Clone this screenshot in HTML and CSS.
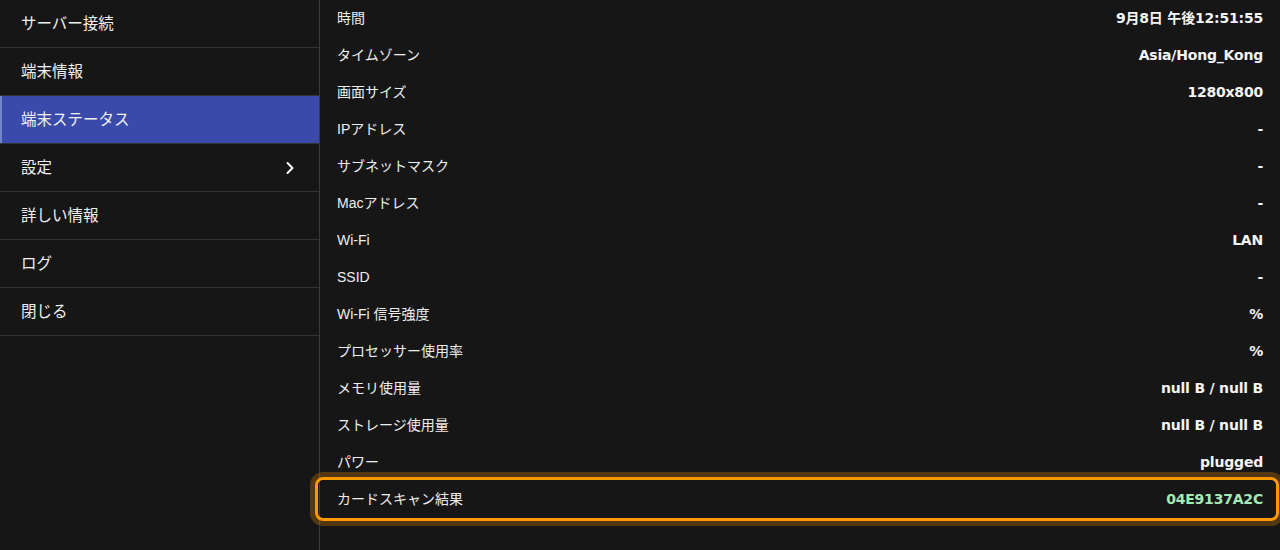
FILE: index.html
```html
<!DOCTYPE html>
<html lang="ja">
<head>
<meta charset="utf-8">
<link rel="stylesheet" href="styles.css">
</head>
<body>
<div class="app">
  <nav class="sidebar">
    <div class="nav-item">サーバー接続</div>
    <div class="nav-item">端末情報</div>
    <div class="nav-item active">端末ステータス</div>
    <div class="nav-item has-sub">設定
      <svg class="chev" width="10" height="14" viewBox="0 0 10 14"><path d="M2.5 2 L7.5 7 L2.5 12" fill="none" stroke="#fff" stroke-width="2" stroke-linecap="round" stroke-linejoin="round"/></svg>
    </div>
    <div class="nav-item">詳しい情報</div>
    <div class="nav-item">ログ</div>
    <div class="nav-item">閉じる</div>
  </nav>
  <main class="content">
    <div class="row"><span class="label">時間</span><span class="value">9月8日 午後12:51:55</span></div>
    <div class="row"><span class="label">タイムゾーン</span><span class="value">Asia/Hong_Kong</span></div>
    <div class="row"><span class="label">画面サイズ</span><span class="value">1280x800</span></div>
    <div class="row"><span class="label">IPアドレス</span><span class="value">-</span></div>
    <div class="row"><span class="label">サブネットマスク</span><span class="value">-</span></div>
    <div class="row"><span class="label">Macアドレス</span><span class="value">-</span></div>
    <div class="row"><span class="label">Wi-Fi</span><span class="value">LAN</span></div>
    <div class="row"><span class="label">SSID</span><span class="value">-</span></div>
    <div class="row"><span class="label">Wi-Fi 信号強度</span><span class="value">%</span></div>
    <div class="row"><span class="label">プロセッサー使用率</span><span class="value">%</span></div>
    <div class="row"><span class="label">メモリ使用量</span><span class="value">null B / null B</span></div>
    <div class="row"><span class="label">ストレージ使用量</span><span class="value">null B / null B</span></div>
    <div class="row"><span class="label">パワー</span><span class="value">plugged</span></div>
    <div class="row focused"><span class="label">カードスキャン結果</span><span class="value scan">04E9137A2C</span></div>
  </main>
</div>
</body>
</html>
```

FILE: styles.css
```css
html, body {
  margin: 0;
  padding: 0;
  background: #161616;
  height: 100%;
  overflow: hidden;
}
body {
  font-family: "Liberation Sans", "Noto Sans CJK JP", sans-serif;
  color: #f2f2f2;
}
.app {
  display: flex;
  height: 550px;
}
.sidebar {
  width: 319px;
  flex: 0 0 319px;
  border-right: 1px solid #3a3a3a;
  padding-left: 2px;
  box-sizing: content-box;
  margin-left: -2px;
}
.nav-item {
  height: 47px;
  border-bottom: 1px solid #333;
  display: flex;
  align-items: center;
  padding-left: 21px;
  padding-right: 24px;
  font-size: 15.5px;
  line-height: 1;
  color: #f0f0f0;
  position: relative;
}
.nav-item.active {
  background: #3a4aab;
  margin-left: -2px;
  padding-left: 23px;
  box-shadow: inset 4px 0 0 #7384c9;
}
.nav-item.has-sub {
  justify-content: space-between;
}
.chev {
  display: block;
}
.content {
  flex: 1;
  display: flex;
  flex-direction: column;
  margin-top: -1px;
}
.row {
  height: 37px;
  flex: 0 0 37px;
  display: flex;
  align-items: center;
  justify-content: space-between;
  padding: 0 17px 0 17px;
  font-size: 14px;
  line-height: 1;
}
.label {
  color: #eeeeee;
}
.value {
  font-family: "DejaVu Sans", "Noto Sans CJK JP", sans-serif;
  font-weight: 700;
  letter-spacing: -0.2px;
  color: #f5f5f5;
}
.row.focused {
  height: 38px;
  flex: 0 0 38px;
  margin: -3px 1px 0 -5px;
  border: 3px solid #ff9800;
  border-radius: 8px;
  padding: 0 13px 0 19px;
  box-shadow: 0 0 0 5px rgba(255, 152, 0, 0.26);
}
.value.scan {
  color: #a6e8b8;
}
```
